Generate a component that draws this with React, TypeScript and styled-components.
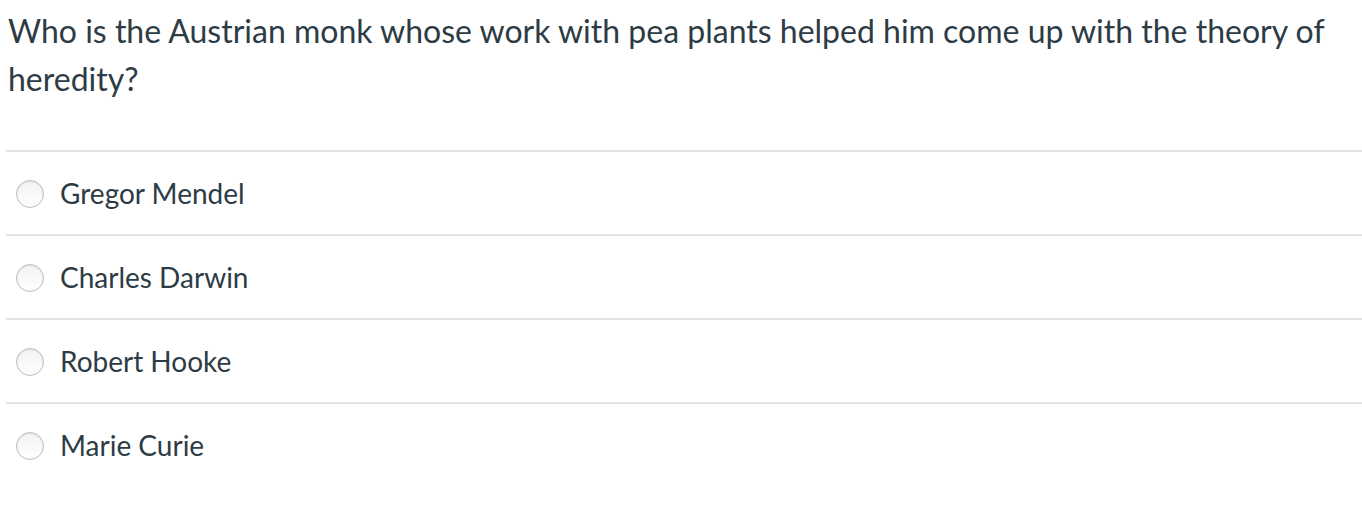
import React from "react";
import styled, { createGlobalStyle } from "styled-components";

const Global = createGlobalStyle`
  html, body { margin: 0; padding: 0; background: #ffffff; }
  body { font-family: Lato, "Noto Sans", sans-serif; color: #2d3b45; }
`;

const Page = styled.div`
  padding: 7px 0 0 6px;
`;

const Question = styled.p`
  margin: 0 0 47px 0;
  padding-left: 2px;
  font-size: 32px;
  line-height: 48px;
  font-weight: 400;
`;

const AnswerList = styled.div`
  display: flex;
  flex-direction: column;
`;

const AnswerRow = styled.label`
  display: flex;
  align-items: center;
  gap: 16px;
  height: 82px;
  padding-left: 10px;
  border-top: 2px solid #e3e3e3;
  cursor: pointer;
`;

const Radio = styled.span`
  flex: none;
  width: 26px;
  height: 26px;
  border-radius: 50%;
  border: 1px solid #bdbdbd;
  background: linear-gradient(#f2f2f2, #ffffff);
  box-shadow: inset 0 1px 2px rgba(0, 0, 0, 0.08);
  margin-top: 2px;
`;

const AnswerText = styled.span`
  font-size: 28px;
  line-height: 34px;
`;

const answers = ["Gregor Mendel", "Charles Darwin", "Robert Hooke", "Marie Curie"];

export default function App() {
  return (
    <Page>
      <Global />
      <Question>
        Who is the Austrian monk whose work with pea plants helped him come up with the theory of heredity?
      </Question>
      <AnswerList>
        {answers.map((a) => (
          <AnswerRow key={a}>
            <Radio />
            <AnswerText>{a}</AnswerText>
          </AnswerRow>
        ))}
      </AnswerList>
    </Page>
  );
}
